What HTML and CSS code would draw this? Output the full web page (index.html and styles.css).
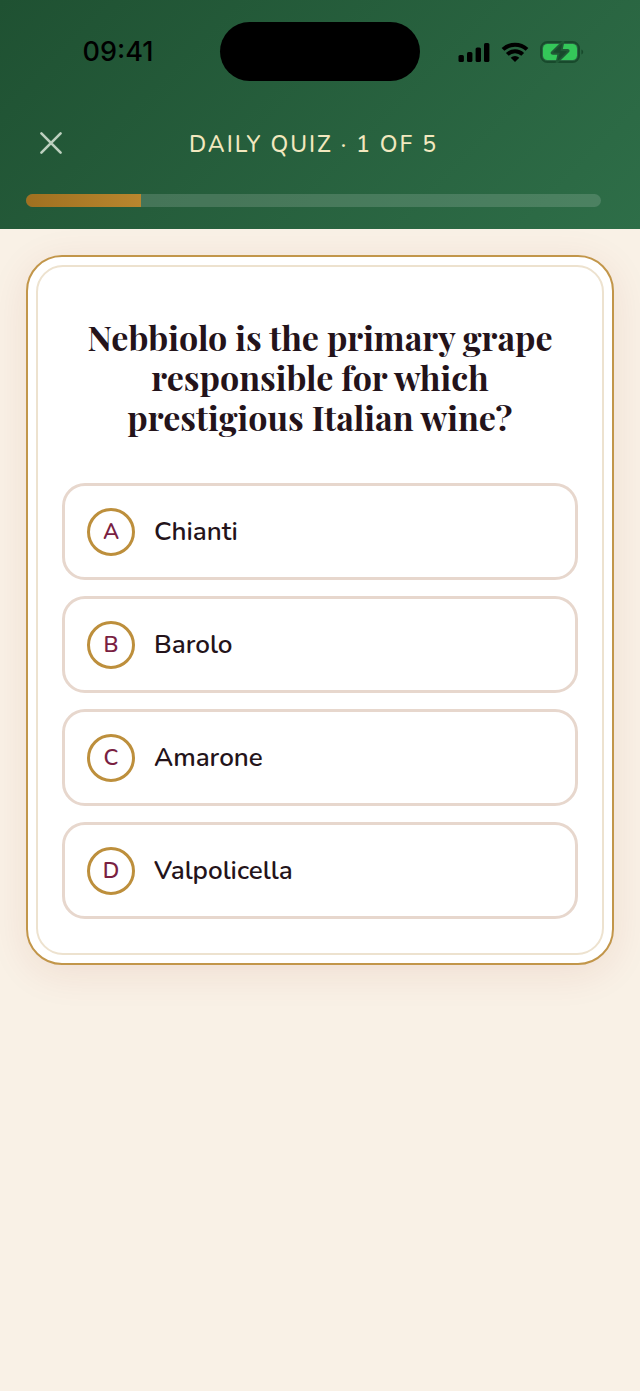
FILE: index.html
```html
<!DOCTYPE html>
<html lang="en">
<head>
    <meta charset="UTF-8">
    <meta name="viewport" content="width=device-width, initial-scale=1.0">
    <title>Daily Quiz</title>
    <link rel="stylesheet" href="styles.css">
</head>
<body>
    <header class="header">
        <div class="status-bar">
            <span class="time">09:41</span>
            <div class="island"></div>
            <div class="status-icons">
                <svg width="32" height="20" viewBox="0 0 32 20">
                    <rect x="0.5" y="13" width="5.4" height="7" rx="1.6"/>
                    <rect x="9" y="10" width="5.4" height="10" rx="1.6"/>
                    <rect x="17.6" y="5.5" width="5.4" height="14.5" rx="1.6"/>
                    <rect x="26" y="1" width="5.4" height="19" rx="1.6"/>
                </svg>
                <svg width="28" height="20" viewBox="0 0 28 20">
                    <g fill="none" stroke="#000" stroke-width="4">
                        <path d="M2 7.4 A17.5 17.5 0 0 1 26 7.4"/>
                        <path d="M6.3 12.4 A11 11 0 0 1 21.7 12.4"/>
                    </g>
                    <path d="M9.7 15.7 A6.5 6.5 0 0 1 18.3 15.7 L14 20 Z"/>
                </svg>
                <svg width="44" height="22" viewBox="0 0 44 22">
                    <rect x="1" y="1" width="38" height="20" rx="6.5" fill="none" stroke="#184a2c" stroke-width="2"/>
                    <rect x="3" y="3" width="34" height="16" rx="4.5" fill="#34c759"/>
                    <path d="M41.4 8.5 C43.8 9.2 43.8 12.8 41.4 13.5 Z" fill="#184a2c"/>
                    <path d="M23.5 0 L11.8 11.4 Q11.2 12.7 13 12.8 L18.6 12.8 L16.5 22 L28.4 10.4 Q29 9.2 27.4 9 L21.6 9 Z" fill="#205a36" stroke="#205a36" stroke-width="2" stroke-linejoin="round"/>
                    <path d="M22.5 2 L13 11.6 L19.8 11.8 L17.6 19.8 L27.2 10.2 L20.4 10 Z" fill="#184a2c"/>
                </svg>
            </div>
        </div>
        <div class="title-bar">
            <button class="close" type="button" aria-label="Close">
                <svg width="24" height="24" viewBox="0 0 24 24">
                    <path d="M2.4 2.4 L21.6 21.6 M21.6 2.4 L2.4 21.6" fill="none" stroke="#bdd0bf" stroke-width="2.6" stroke-linecap="round"/>
                </svg>
            </button>
            <h1 class="title">DAILY QUIZ · 1 OF 5</h1>
        </div>
        <progress class="progress" value="1" max="5" aria-label="Quiz progress"></progress>
    </header>

    <main class="content">
        <section class="card">
            <div class="card-inner">
                <h2 class="question">Nebbiolo is the primary grape responsible for which prestigious Italian wine?</h2>
                <div class="options">
                    <button class="option" type="button"><span class="letter">A</span>Chianti</button>
                    <button class="option" type="button"><span class="letter">B</span>Barolo</button>
                    <button class="option" type="button"><span class="letter">C</span>Amarone</button>
                    <button class="option" type="button"><span class="letter">D</span>Valpolicella</button>
                </div>
            </div>
        </section>
    </main>
</body>
</html>
```
FILE: styles.css
```css
* {
    box-sizing: border-box;
}

body {
    margin: 0;
    min-height: 100vh;
    background-color: #f9f1e6;
    font-family: Nunito, Lato, "Noto Sans", sans-serif;
    color: #24131a;
}

/* header */
.header {
    padding: 22px 39px 22px 26px;
    background: linear-gradient(135deg, #1f5132, #2e6e48);
}

.status-bar {
    display: grid;
    grid-template-columns: 1fr 200px 1fr;
    align-items: center;
    margin-right: -13px;
}

.time {
    justify-self: center;
    font-family: Inter, sans-serif;
    font-size: 27px;
    font-weight: 500;
    color: #000;
    padding-right: 10px;
}

.island {
    height: 59px;
    border-radius: 30px;
    background-color: #000;
}

.status-icons {
    display: flex;
    align-items: center;
    justify-content: center;
    gap: 11px;
    padding-left: 8px;
}

.title-bar {
    display: grid;
    grid-template-columns: 50px 1fr 50px;
    align-items: center;
    height: 50px;
    margin-top: 37px;
}

.close {
    width: 50px;
    height: 50px;
    padding: 13px;
    border: none;
    background: none;
    cursor: pointer;
}

.close svg {
    display: block;
}

.title {
    margin: 0;
    padding-top: 2px;
    text-align: center;
    font-size: 23px;
    font-weight: 500;
    letter-spacing: 2px;
    color: #f2e8bf;
}

.progress {
    display: block;
    width: 100%;
    height: 13px;
    margin-top: 26px;
    border: none;
    border-radius: 7px;
    overflow: hidden;
    appearance: none;
    background-color: rgba(255, 255, 255, 0.15);
}

.progress::-webkit-progress-bar {
    background: transparent;
}

.progress::-webkit-progress-value {
    background: linear-gradient(90deg, #a07020, #b9862e);
}

/* question card */
.content {
    padding: 26px;
}

.card {
    padding: 8px;
    border: 2px solid #c2964a;
    border-radius: 36px;
    background-color: #fff;
    box-shadow: 0 8px 40px rgba(140, 30, 10, 0.09);
}

.card-inner {
    padding: 50px 24px 34px;
    border: 2px solid #ede2cf;
    border-radius: 27px;
}

.question {
    margin: 0 0 46px;
    text-align: center;
    font-family: "Playfair Display", "Liberation Serif", serif;
    font-size: 34px;
    line-height: 40px;
    font-weight: 700;
}

.options {
    display: grid;
    gap: 16px;
}

.option {
    display: flex;
    align-items: center;
    gap: 19px;
    min-height: 97px;
    padding: 0 22px;
    border: 3px solid #e7d7cd;
    border-radius: 23px;
    background-color: #fff;
    font-family: inherit;
    font-size: 26px;
    font-weight: 600;
    color: inherit;
    cursor: pointer;
}

.letter {
    display: flex;
    align-items: center;
    justify-content: center;
    width: 48px;
    height: 48px;
    border: 3px solid #bd8f3c;
    border-radius: 50%;
    font-size: 22px;
    color: #7a1f42;
}
```
